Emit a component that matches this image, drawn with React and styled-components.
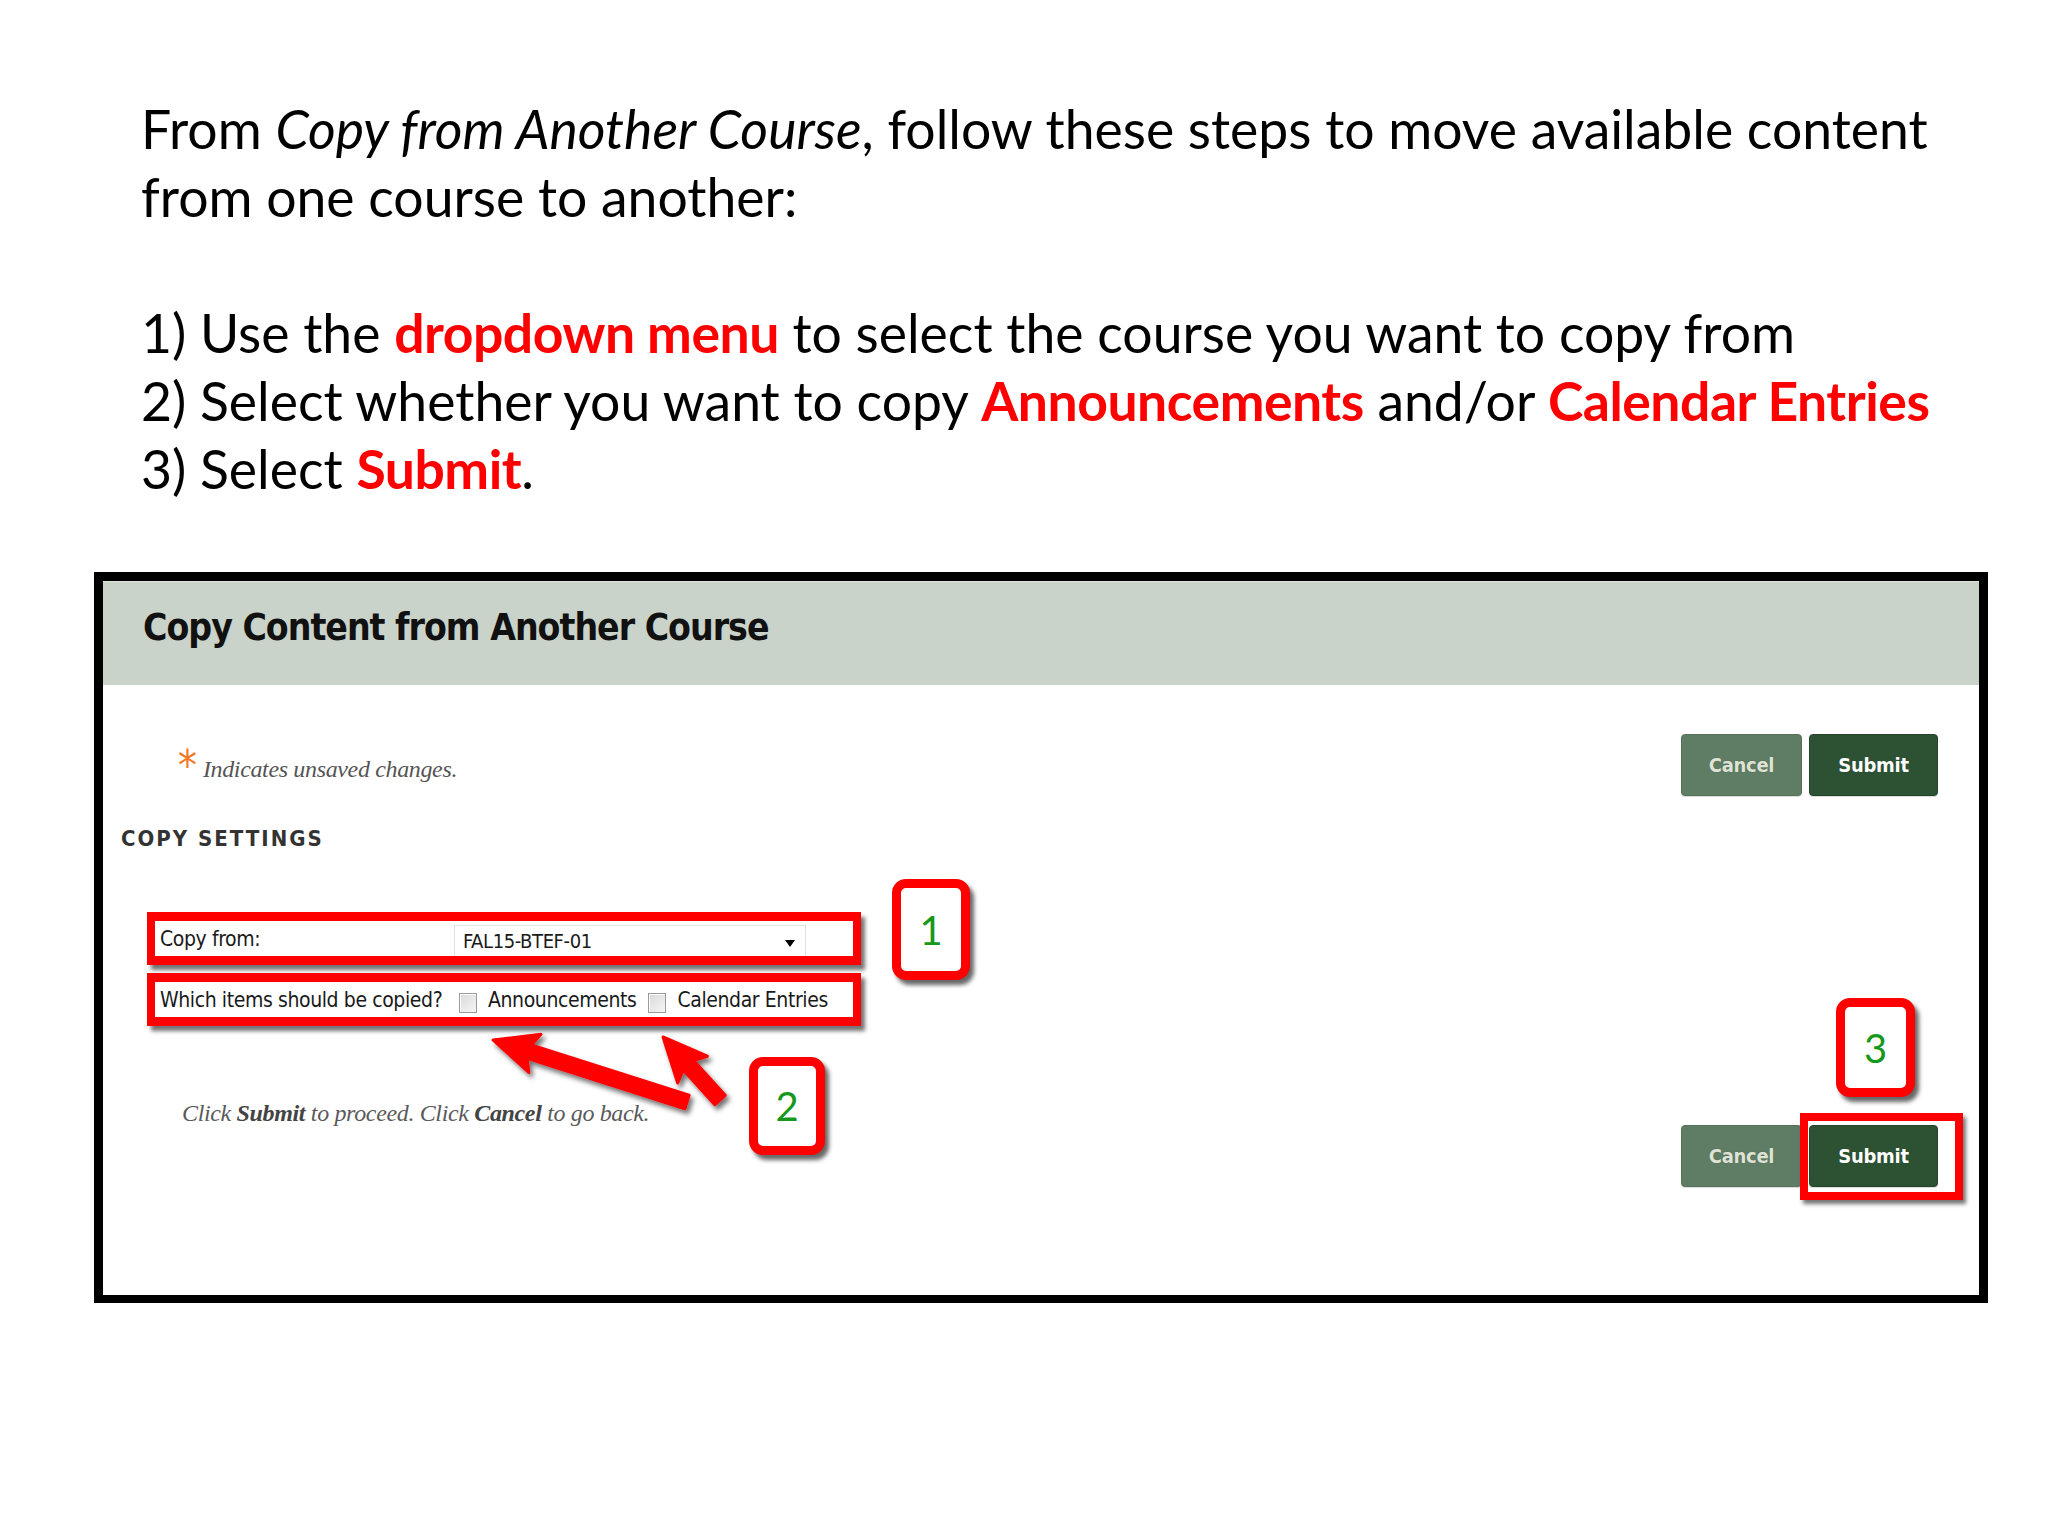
import React from 'react';
import styled, { createGlobalStyle } from 'styled-components';

const GlobalStyle = createGlobalStyle`
  html, body {
    margin: 0;
    padding: 0;
    background: #ffffff;
  }
  #root {
    min-height: 1536px;
  }
`;

const NARROW = `"Liberation Sans Narrow", "DejaVu Sans Condensed", "Arial Narrow", sans-serif`;
const SERIF = `"Liberation Serif", "DejaVu Serif", serif`;

const arrows = [
  { tail: [584, 521], tip: [390, 459] },
  { tail: [617, 519], tip: [560, 456] },
];

const arrowPoints = ({ tail, tip }) => {
  const shaft = 14;
  const headLen = 38;
  const headW = 40;
  const dx = tip[0] - tail[0];
  const dy = tip[1] - tail[1];
  const len = Math.hypot(dx, dy);
  const ux = dx / len;
  const uy = dy / len;
  const nx = -uy;
  const ny = ux;
  const bx = tip[0] - ux * headLen;
  const by = tip[1] - uy * headLen;
  const p = (x, y) => `${x.toFixed(1)},${y.toFixed(1)}`;
  return [
    p(tail[0] + (nx * shaft) / 2, tail[1] + (ny * shaft) / 2),
    p(bx + (nx * shaft) / 2, by + (ny * shaft) / 2),
    p(bx + (nx * headW) / 2 - ux * 6, by + (ny * headW) / 2 - uy * 6),
    p(tip[0], tip[1]),
    p(bx - (nx * headW) / 2 - ux * 6, by - (ny * headW) / 2 - uy * 6),
    p(bx - (nx * shaft) / 2, by - (ny * shaft) / 2),
    p(tail[0] - (nx * shaft) / 2, tail[1] - (ny * shaft) / 2),
  ].join(' ');
};

const App = () => {
  return (
    <>
      <GlobalStyle />
      <Page>
        <Instructions>
          <Line>
            From <em>Copy from Another Course</em>, follow these steps to move available content
          </Line>
          <Line>from one course to another:</Line>
          <Line>&nbsp;</Line>
          <Line>
            1) Use the <Hl>dropdown menu</Hl> to select the course you want to copy from
          </Line>
          <Line>
            2) Select whether you want to copy <Hl>Announcements</Hl> and/or <Hl>Calendar Entries</Hl>
          </Line>
          <Line>
            3) Select <Hl>Submit</Hl>.
          </Line>
        </Instructions>

        <Panel>
          <PanelHeader>
            <PanelTitle>Copy Content from Another Course</PanelTitle>
          </PanelHeader>

          <PanelBody>
            <TopBar>
              <Note>
                <Asterisk>*</Asterisk>
                <NoteText>Indicates unsaved changes.</NoteText>
              </Note>
              <ButtonGroup>
                <Button>Cancel</Button>
                <Button primary>Submit</Button>
              </ButtonGroup>
            </TopBar>

            <SectionTitle>COPY SETTINGS</SectionTitle>

            <Rows>
              <FieldRow>
                <FieldLabel>Copy from:</FieldLabel>
                <SelectBox>
                  <span>FAL15-BTEF-01</span>
                  <Caret />
                </SelectBox>
              </FieldRow>
              <FieldRow>
                <FieldLabel narrow>Which items should be copied?</FieldLabel>
                <Check />
                <CheckText>Announcements</CheckText>
                <Check />
                <CheckText>Calendar Entries</CheckText>
              </FieldRow>
            </Rows>

            <Footer>
              <Hint>
                Click <b>Submit</b> to proceed. Click <b>Cancel</b> to go back.
              </Hint>
              <ButtonGroup>
                <Button>Cancel</Button>
                <Highlighted>
                  <Button primary>Submit</Button>
                  <HighlightRing />
                </Highlighted>
              </ButtonGroup>
            </Footer>
          </PanelBody>

          <ArrowLayer viewBox="0 0 1877 714" width="1877" height="714">
            <defs>
              <filter id="arrowShadow" x="-20%" y="-20%" width="140%" height="140%">
                <feDropShadow dx="3" dy="4" stdDeviation="2.5" floodColor="#000" floodOpacity="0.55" />
              </filter>
            </defs>
            {arrows.map((a, i) => (
              <polygon
                key={i}
                points={arrowPoints(a)}
                fill="#ff0000"
                stroke="#ff0000"
                strokeWidth="3"
                strokeLinejoin="round"
                filter="url(#arrowShadow)"
              />
            ))}
          </ArrowLayer>

          <Callout left={789} top={298} w={78} h={101}>1</Callout>
          <Callout left={646} top={476} w={76} h={98}>2</Callout>
          <Callout left={1733} top={417} w={79} h={99}>3</Callout>
        </Panel>
      </Page>
    </>
  );
};

export default App;

const Page = styled.div`
  width: 2048px;
  height: 1536px;
  box-sizing: border-box;
  padding-top: 94px;
  background: #fff;
`;

const Instructions = styled.div`
  margin-left: 141px;
  font-family: Lato, "Open Sans", sans-serif;
  font-size: 53.5px;
  line-height: 68px;
  color: #000;
  & em {
    font-style: italic;
  }
`;

const Line = styled.div`
  white-space: nowrap;
`;

const Hl = styled.span`
  color: #ff0000;
  font-weight: 700;
  letter-spacing: -0.5px;
`;

const Panel = styled.div`
  position: relative;
  margin-top: 70px;
  margin-left: 94px;
  width: 1894px;
  height: 731px;
  box-sizing: border-box;
  border: 9px solid #000;
  border-bottom-width: 8px;
  background: #fff;
`;

const PanelHeader = styled.div`
  height: 104px;
  box-sizing: border-box;
  padding: 27px 40px 0;
  background: #cad3ca;
  border-top: 1px solid #dde3dd;
`;

const PanelTitle = styled.h1`
  margin: 0;
  font-family: ${NARROW};
  font-weight: 700;
  font-size: 37px;
  line-height: 37px;
  letter-spacing: -1px;
  color: #111;
`;

const PanelBody = styled.div`
  display: flex;
  flex-direction: column;
  padding-right: 41px;
`;

const TopBar = styled.div`
  display: flex;
  justify-content: space-between;
  align-items: flex-start;
  margin-top: 49px;
`;

const Note = styled.div`
  display: flex;
  align-items: flex-start;
  margin-top: 20px;
  padding-left: 75px;
`;

const Asterisk = styled.span`
  font-family: ${NARROW};
  font-size: 42px;
  line-height: 30px;
  color: #f07a2a;
  margin-right: 6px;
  margin-top: -3px;
`;

const NoteText = styled.span`
  font-family: ${SERIF};
  font-style: italic;
  font-size: 24px;
  line-height: 30px;
  letter-spacing: -0.35px;
  color: #555;
`;

const ButtonGroup = styled.div`
  display: flex;
  gap: 7px;
`;

const Button = styled.button`
  height: 62px;
  width: ${(p) => (p.primary ? '129px' : '121px')};
  border: 1px solid ${(p) => (p.primary ? '#24452a' : '#567259')};
  border-radius: 4px;
  background: ${(p) => (p.primary ? '#2c5233' : '#5f7c64')};
  color: ${(p) => (p.primary ? '#ffffff' : '#dfe3d5')};
  font-family: ${NARROW};
  font-weight: 700;
  font-size: 20px;
  letter-spacing: -0.3px;
  padding: 0;
  text-shadow: 0 0 1px rgba(0, 0, 0, 0.3);
  box-shadow: 0 1px 1px rgba(0, 0, 0, 0.15);
`;

const Highlighted = styled.div`
  position: relative;
  display: flex;
`;

const HighlightRing = styled.div`
  position: absolute;
  left: -9px;
  top: -12px;
  right: -25px;
  bottom: -13px;
  border: 8px solid #ff0000;
  box-shadow: 3px 4px 4px rgba(0, 0, 0, 0.55);
  pointer-events: none;
`;

const SectionTitle = styled.h2`
  margin: 30px 0 0 18px;
  font-family: ${NARROW};
  font-weight: 700;
  font-size: 22px;
  line-height: 26px;
  letter-spacing: 2px;
  color: #333;
`;

const Rows = styled.div`
  display: flex;
  flex-direction: column;
  gap: 8px;
  margin: 60px 0 0 44px;
  width: 714px;
`;

const FieldRow = styled.div`
  display: flex;
  align-items: center;
  height: 53px;
  box-sizing: border-box;
  border: 9px solid #ff0000;
  border-left-width: 8px;
  border-right-width: 8px;
  background: #fff;
  box-shadow: 4px 5px 4px rgba(0, 0, 0, 0.55);
  padding-left: 5px;
  font-family: ${NARROW};
  font-size: 21px;
  letter-spacing: -0.4px;
  color: #1a1a1a;
`;

const FieldLabel = styled.span`
  flex-shrink: 0;
  width: ${(p) => (p.narrow ? '276px' : '294px')};
  margin-right: ${(p) => (p.narrow ? '23px' : '0')};
  white-space: nowrap;
`;

const SelectBox = styled.div`
  position: relative;
  flex-shrink: 0;
  align-self: flex-end;
  display: flex;
  align-items: center;
  width: 352px;
  height: 31px;
  box-sizing: border-box;
  padding-left: 8px;
  border: 1px solid #e2e2e2;
  border-bottom: none;
  background: #fff;
  font-size: 20px;
`;

const Caret = styled.span`
  position: absolute;
  right: 10px;
  top: 14px;
  width: 0;
  height: 0;
  border-left: 5px solid transparent;
  border-right: 5px solid transparent;
  border-top: 7px solid #000;
`;

const Check = styled.span`
  flex-shrink: 0;
  display: inline-block;
  width: 18px;
  height: 20px;
  box-sizing: border-box;
  margin-top: 6px;
  border: 1px solid #9a9a9a;
  background: linear-gradient(135deg, #d9d9d9, #f6f6f6);
  box-shadow: inset 1px 1px 0 #fff;
`;

const CheckText = styled.span`
  flex-shrink: 0;
  margin: 0 12px 0 11px;
  white-space: nowrap;
`;

const Footer = styled.div`
  display: flex;
  justify-content: space-between;
  align-items: flex-start;
  margin-top: 72px;
`;

const Hint = styled.p`
  margin: 0 0 0 79px;
  font-family: ${SERIF};
  font-style: italic;
  font-size: 24px;
  line-height: 30px;
  letter-spacing: -0.35px;
  color: #5a5a5a;
  & b {
    color: #444;
  }
  & + div {
    margin-top: 27px;
  }
`;

const ArrowLayer = styled.svg`
  position: absolute;
  left: 0;
  top: 0;
  pointer-events: none;
  overflow: visible;
`;

const Callout = styled.div`
  position: absolute;
  left: ${(p) => p.left}px;
  top: ${(p) => p.top}px;
  width: ${(p) => p.w}px;
  height: ${(p) => p.h}px;
  box-sizing: border-box;
  border: 9px solid #ff0000;
  border-radius: 14px;
  background: #fff;
  box-shadow: 4px 5px 4px rgba(0, 0, 0, 0.6);
  display: flex;
  align-items: center;
  justify-content: center;
  font-family: Lato, "Open Sans", sans-serif;
  font-size: 40px;
  color: #16981a;
`;
